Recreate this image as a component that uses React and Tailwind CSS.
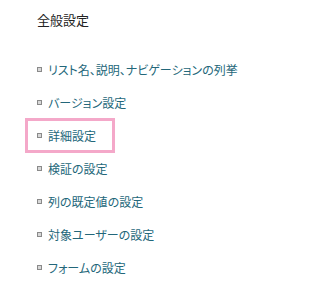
import React from "react";

const items = [
  "リスト名、説明、ナビゲーションの列挙",
  "バージョン設定",
  "詳細設定",
  "検証の設定",
  "列の既定値の設定",
  "対象ユーザーの設定",
  "フォームの設定",
];

export default function App() {
  return (
    <div
      className="w-[311px] h-[301px] bg-white pl-[37px] pt-[10px] [font-feature-settings:'palt']"
      style={{ fontFamily: '"Noto Sans CJK JP", "Noto Sans", sans-serif' }}
    >
      <div className="h-[20px] leading-[20px] text-[13px] text-[#222222]">全般設定</div>
      <ul className="mt-[23px] flex flex-col">
        {items.map((t, i) => (
          <li key={i} className="relative h-[33px] flex items-center">
            <span className="w-[5px] h-[5px] border border-[#8a8a8a] bg-[#d8d8d8] shrink-0" />
            <span className="ml-[6px] text-[12px] leading-[16px] text-[#23677a] whitespace-nowrap">{t}</span>
            {i === 2 && (
              <div className="absolute left-[-12px] top-[-1px] w-[90px] h-[35px] border-[3px] border-[#f4a8c9]" />
            )}
          </li>
        ))}
      </ul>
    </div>
  );
}
